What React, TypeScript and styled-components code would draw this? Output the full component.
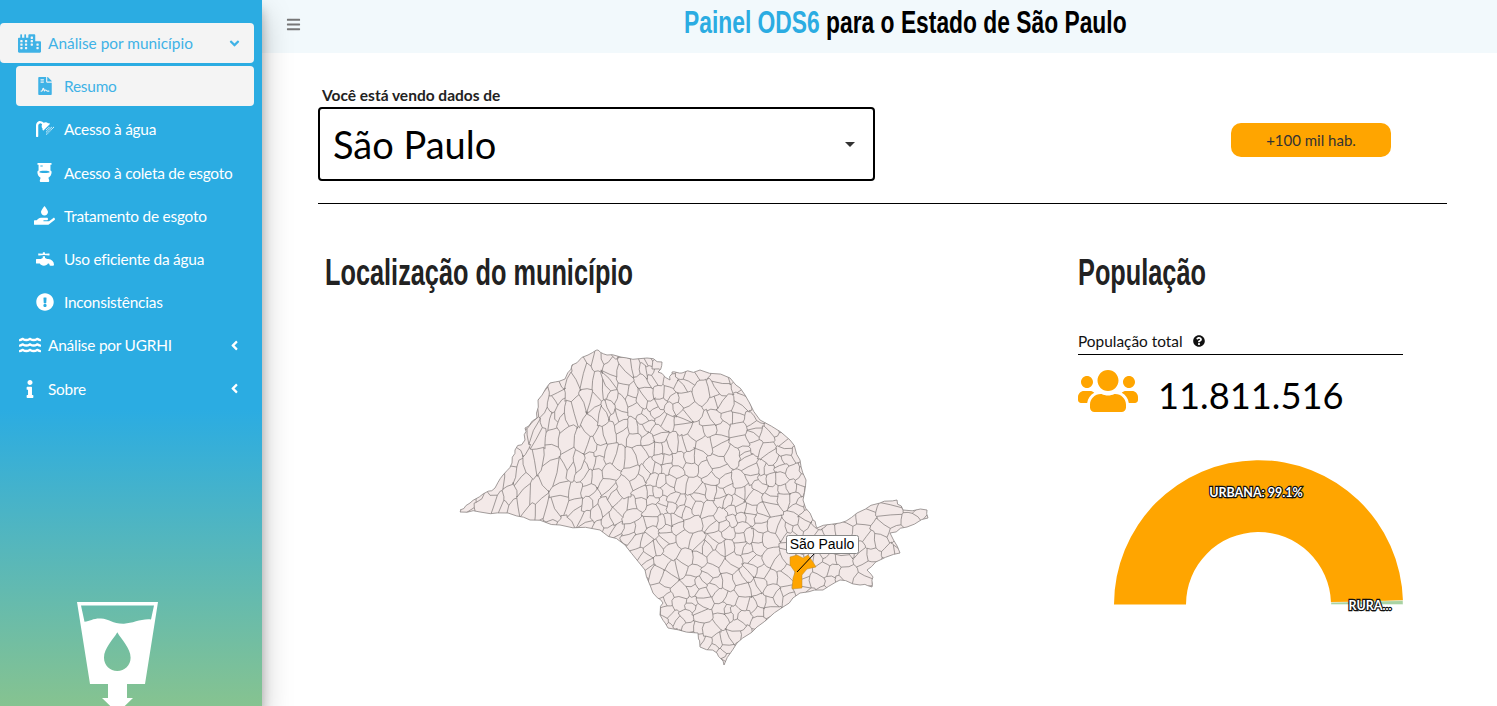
import React from 'react';
import styled, { createGlobalStyle } from 'styled-components';
import {
  FaAngleDown,
  FaAngleLeft,
  FaBars,
  FaCity,
  FaExclamationCircle,
  FaFaucet,
  FaFileContract,
  FaHandHoldingWater,
  FaInfo,
  FaQuestionCircle,
  FaShower,
  FaToilet,
  FaUsers,
  FaWater,
} from 'react-icons/fa';

const BODY_FONT = '"Lato", "Noto Sans", sans-serif';
const TITLE_FONT = '"Liberation Sans", sans-serif';
const BLUE = '#2bace2';
const ORANGE = '#ffa500';

type Point = [number, number];

// state outline in page pixels, the map origin (455, 345) is taken off when drawing
const OUTLINE: Point[] = [
  [460, 510], [470, 503], [483, 494], [495, 488], [503, 475], [512, 463], [515, 450], [525, 440],
  [525, 428], [537, 418], [538, 400], [550, 383], [565, 379], [572, 365], [588, 355], [598, 350],
  [607, 355], [627, 358], [647, 358], [662, 362], [658, 372], [670, 380], [672, 372], [682, 373],
  [700, 370], [730, 378], [745, 395], [760, 420], [790, 440], [800, 460], [806, 480], [803, 500],
  [813, 520], [817, 528], [840, 523], [857, 513], [880, 503], [897, 500], [903, 510], [927, 510],
  [928, 518], [907, 527], [890, 533], [900, 553], [880, 560], [867, 570], [873, 577], [872, 587],
  [860, 585], [840, 580], [823, 590], [800, 593], [783, 607], [757, 627], [737, 643], [724, 665],
  [717, 653], [700, 647], [698, 633], [668, 628], [660, 615], [663, 603], [653, 593], [645, 570],
  [625, 545], [600, 530], [560, 525], [530, 520], [508, 513], [480, 512], [460, 512],
];

const CAPITAL: Point[] = [
  [790, 557], [797, 555], [803, 558], [808, 555], [813, 562], [816, 567], [807, 569], [802, 575],
  [802, 588], [792, 589], [793, 578], [795, 572], [790, 565],
];

const makeRandom = (seed: number) => () => {
  seed = (seed + 0x6d2b79f5) | 0;
  let t = Math.imul(seed ^ (seed >>> 15), 1 | seed);
  t = (t + Math.imul(t ^ (t >>> 7), 61 | t)) ^ t;
  return ((t ^ (t >>> 14)) >>> 0) / 4294967296;
};

const toPath = (points: Point[]) =>
  points.map(([x, y], i) => `${i ? 'L' : 'M'}${(x - 455).toFixed(1)} ${(y - 345).toFixed(1)}`).join('') + 'Z';

const roughen = (points: Point[]) => {
  const random = makeRandom(5);
  const out: Point[] = [];
  points.forEach((p, i) => {
    const q = points[(i + 1) % points.length];
    out.push(p);
    out.push([(p[0] * 2 + q[0]) / 3 + (random() - 0.5) * 3, (p[1] * 2 + q[1]) / 3 + (random() - 0.5) * 3]);
    out.push([(p[0] + q[0] * 2) / 3 + (random() - 0.5) * 3, (p[1] + q[1] * 2) / 3 + (random() - 0.5) * 3]);
  });
  return out;
};

const STATE_PATH = toPath(roughen(OUTLINE));

// west of the state the municipalities are long and thin, so the mesh gets stretched there
const warp = ([x, y]: Point): Point => {
  const t = Math.max(0, Math.min(1, (650 - x) / 190));
  const stretched = 460 + (y - 460) * (1 + 1.3 * t);
  return [x - (stretched - 460) * 0.3 * t, stretched];
};

// municipal borders: a voronoi mesh with wobbly edges, clipped to the state
const buildMesh = () => {
  const random = makeRandom(17);
  const seeds: Point[] = [];
  for (let y = 345; y < 675; y += 10) {
    for (let x = 425; x < 935; x += 10) {
      const keep = x > 830 ? 0.5 : 0.78;
      if (random() < keep) seeds.push([x + random() * 9.5, y + random() * 9.5]);
    }
  }
  const edges = new Map<string, string>();
  const fmt = (p: Point) => `${(p[0] - 455).toFixed(1)} ${(p[1] - 345).toFixed(1)}`;
  seeds.forEach((seed, index) => {
    let cell: Point[] = [
      [seed[0] - 40, seed[1] - 40],
      [seed[0] + 40, seed[1] - 40],
      [seed[0] + 40, seed[1] + 40],
      [seed[0] - 40, seed[1] + 40],
    ];
    seeds.forEach((other, otherIndex) => {
      if (otherIndex === index) return;
      const dx = other[0] - seed[0];
      const dy = other[1] - seed[1];
      if (dx * dx + dy * dy > 6400) return;
      const mx = (seed[0] + other[0]) / 2;
      const my = (seed[1] + other[1]) / 2;
      const side = (p: Point) => (p[0] - mx) * dx + (p[1] - my) * dy;
      const next: Point[] = [];
      cell.forEach((p, i) => {
        const q = cell[(i + 1) % cell.length];
        const sp = side(p);
        const sq = side(q);
        if (sp <= 0) next.push(p);
        if (sp * sq < 0) {
          const t = sp / (sp - sq);
          next.push([p[0] + (q[0] - p[0]) * t, p[1] + (q[1] - p[1]) * t]);
        }
      });
      cell = next;
    });
    cell.forEach((p, i) => {
      const q = cell[(i + 1) % cell.length];
      const a = `${p[0].toFixed(1)},${p[1].toFixed(1)}`;
      const b = `${q[0].toFixed(1)},${q[1].toFixed(1)}`;
      const key = a < b ? `${a}|${b}` : `${b}|${a}`;
      if (edges.has(key)) return;
      const wobble = makeRandom(Math.round(p[0] * q[0] + p[1] * q[1]));
      const mid: Point = [
        (p[0] + q[0]) / 2 + (wobble() - 0.5) * 3,
        (p[1] + q[1]) / 2 + (wobble() - 0.5) * 3,
      ];
      edges.set(key, `M${fmt(warp(p))}L${fmt(warp(mid))}L${fmt(warp(q))}`);
    });
  });
  return Array.from(edges.values()).join('');
};

const MESH = buildMesh();

const GlobalStyle = createGlobalStyle`
  html, body {
    margin: 0;
    height: 100%;
    overflow: hidden;
    background: #fff;
  }
  #root {
    height: 100%;
  }
`;

const Page = styled.div`
  display: flex;
  height: 706px;
  font-family: ${BODY_FONT};
  overflow: hidden;
`;

const Sidebar = styled.aside`
  position: relative;
  z-index: 2;
  flex: 0 0 262px;
  display: flex;
  flex-direction: column;
  padding-top: 23px;
  box-sizing: border-box;
  background: linear-gradient(180deg, ${BLUE} 0%, ${BLUE} 58%, #86c390 100%);
  box-shadow: 0 14px 28px rgba(0, 0, 0, 0.25), 0 10px 10px rgba(0, 0, 0, 0.22);
  overflow: hidden;
`;

const Nav = styled.nav`
  display: flex;
  flex-direction: column;
  gap: 3.2px;
  padding-right: 8px;
`;

const NavItem = styled.div<{ $active?: boolean; $child?: boolean }>`
  display: flex;
  align-items: center;
  height: 40px;
  margin-left: ${({ $child }) => ($child ? '16px' : '0')};
  padding: 0 12px 0 18px;
  border-radius: 4px;
  font-size: 15.4px;
  letter-spacing: ${({ $child, $active }) => (!$child && $active ? '0' : '-0.22px')};
  color: ${({ $active }) => ($active ? '#3fb2e6' : '#fff')};
  background: ${({ $active }) => ($active ? '#f4f4f4' : 'transparent')};
`;

const NavIcon = styled.span<{ $child?: boolean; $size: number }>`
  flex: 0 0 auto;
  display: flex;
  justify-content: center;
  width: ${({ $child }) => ($child ? '21px' : '23px')};
  margin-right: ${({ $child }) => ($child ? '9px' : '7px')};
  font-size: ${({ $size }) => $size}px;
`;

const NavArrow = styled.span`
  display: flex;
  margin-left: auto;
  font-size: 15px;
`;

const Logo = styled.svg`
  display: block;
  width: 81px;
  height: 112px;
  margin: auto 0 -8px 77px;
  flex: 0 0 auto;
`;

const Main = styled.main`
  flex: 1;
  min-width: 0;
  display: flex;
  flex-direction: column;
`;

const TopBar = styled.header`
  position: relative;
  flex: 0 0 53px;
  display: flex;
  align-items: center;
  justify-content: center;
  background: #f2f9fc;
`;

const MenuButton = styled.span`
  position: absolute;
  left: 24px;
  top: 17px;
  display: flex;
  font-size: 15px;
  color: #777;
`;

const Title = styled.h1`
  display: inline-block;
  margin: 0 0 8px;
  font-family: ${TITLE_FONT};
  font-size: 32px;
  font-weight: 700;
  white-space: nowrap;
  color: #000;
  transform: translateX(26px) scaleX(0.713);
`;

const TitleAccent = styled.span`
  color: ${BLUE};
`;

const Content = styled.div`
  display: flex;
  flex-direction: column;
  padding: 34px 50px 0 56px;
`;

const FilterRow = styled.div`
  display: flex;
  align-items: flex-start;
  justify-content: space-between;
  padding-right: 56px;
`;

const FilterLabel = styled.label`
  display: block;
  height: 20px;
  padding-left: 4px;
  font-size: 15.5px;
  font-weight: 700;
  line-height: 16px;
  color: #222;
`;

const SelectBox = styled.div`
  display: flex;
  align-items: center;
  justify-content: space-between;
  width: 557px;
  height: 74px;
  box-sizing: border-box;
  padding: 0 18px 0 13px;
  border: 2px solid #000;
  border-radius: 4px;
  font-size: 38px;
  color: #000;
`;

const Caret = styled.span`
  width: 0;
  height: 0;
  border-left: 5px solid transparent;
  border-right: 5px solid transparent;
  border-top: 5px solid #333;
`;

const SizeBadge = styled.div`
  margin-top: 36px;
  width: 160px;
  height: 34px;
  border-radius: 10px;
  background: ${ORANGE};
  font-size: 15px;
  line-height: 34px;
  text-align: center;
  color: #333;
`;

const Divider = styled.hr`
  width: 100%;
  margin: 22px 0 0;
  border: 0;
  border-top: 1px solid #000;
`;

const Columns = styled.div`
  display: grid;
  grid-template-columns: 760px 325px;
  margin-top: 46px;
`;

const Heading = styled.h2`
  margin: 0;
  font-family: ${TITLE_FONT};
  font-size: 37px;
  font-weight: 700;
  line-height: 46px;
  white-space: nowrap;
  color: #222;
  transform: scaleX(0.684);
  transform-origin: left center;
`;

const MapHeading = styled(Heading)`
  margin-left: 7px;
`;

const MapFigure = styled.svg`
  display: block;
  margin: 49px 0 0 137px;
`;

const Metric = styled.div`
  margin-top: 32px;
`;

const MetricLabel = styled.div`
  display: flex;
  align-items: center;
  gap: 9px;
  height: 27px;
  padding-bottom: 1px;
  box-sizing: border-box;
  border-bottom: 1px solid #000;
  font-size: 15.4px;
  color: #111;
`;

const MetricHelp = styled.span`
  display: flex;
  font-size: 12px;
  margin-left: 1px;
`;

const MetricValue = styled.div`
  display: flex;
  align-items: center;
  gap: 20px;
  height: 79px;
  font-size: 36.3px;
  color: #000;
`;

const MetricIcon = styled.span`
  display: flex;
  margin-bottom: 7px;
  font-size: 60px;
  color: ${ORANGE};
`;

const Gauge = styled.svg`
  display: block;
  margin-top: 26px;
  overflow: visible;
`;

const GaugeLabel = styled.text`
  font-family: ${BODY_FONT};
  font-size: 12.5px;
  font-weight: 700;
  fill: #fff;
  stroke: #111;
  stroke-width: 2.4px;
  paint-order: stroke;
`;

const menu = [
  { label: 'Resumo', icon: <FaFileContract />, size: 18, active: true },
  { label: 'Acesso à água', icon: <FaShower />, size: 18 },
  { label: 'Acesso à coleta de esgoto', icon: <FaToilet />, size: 19 },
  { label: 'Tratamento de esgoto', icon: <FaHandHoldingWater />, size: 21 },
  { label: 'Uso eficiente da água', icon: <FaFaucet />, size: 18 },
  { label: 'Inconsistências', icon: <FaExclamationCircle />, size: 18 },
];

const polar = (cx: number, cy: number, r: number, deg: number) => {
  const a = (deg * Math.PI) / 180;
  return `${(cx + r * Math.cos(a)).toFixed(2)} ${(cy - r * Math.sin(a)).toFixed(2)}`;
};

const slice = (from: number, to: number) =>
  `M${polar(144.5, 144.5, 144.5, from)}A144.5 144.5 0 0 1 ${polar(144.5, 144.5, 144.5, to)}` +
  `L${polar(144.5, 144.5, 72.5, to)}A72.5 72.5 0 0 0 ${polar(144.5, 144.5, 72.5, from)}Z`;

const App = () => {
  return (
    <Page>
      <GlobalStyle />
      <Sidebar>
        <Nav>
          <NavItem $active>
            <NavIcon $size={23}><FaCity /></NavIcon>
            Análise por município
            <NavArrow><FaAngleDown /></NavArrow>
          </NavItem>
          {menu.map((item) => (
            <NavItem key={item.label} $child $active={item.active}>
              <NavIcon $child $size={item.size}>{item.icon}</NavIcon>
              {item.label}
            </NavItem>
          ))}
          <NavItem>
            <NavIcon $size={22}><FaWater /></NavIcon>
            Análise por UGRHI
            <NavArrow><FaAngleLeft /></NavArrow>
          </NavItem>
          <NavItem>
            <NavIcon $size={18}><FaInfo /></NavIcon>
            Sobre
            <NavArrow><FaAngleLeft /></NavArrow>
          </NavItem>
        </Nav>
        <Logo viewBox="0 0 81 112">
          <path
            fill="#fff"
            fillRule="evenodd"
            d="M0 0H81L68 82H50V96H56L40.500 111L25 96H31V82H13ZM4 3.500L7.500 19.700C13 19 17 16 24 16.500C32 17 36 22 47 21.700C56 21.500 64 16.500 74 17.500L77 3.500ZM40.300 30.300C36 38 27 46 27 55.700C27 63 33 69 40.300 69C47.600 69 53.600 63 53.600 55.700C53.600 46 44.600 38 40.300 30.300Z"
          />
        </Logo>
      </Sidebar>
      <Main>
        <TopBar>
          <MenuButton><FaBars /></MenuButton>
          <Title>
            <TitleAccent>Painel ODS6</TitleAccent> para o Estado de São Paulo
          </Title>
        </TopBar>
        <Content>
          <FilterRow>
            <div>
              <FilterLabel>Você está vendo dados de</FilterLabel>
              <SelectBox>
                São Paulo
                <Caret />
              </SelectBox>
            </div>
            <SizeBadge>+100 mil hab.</SizeBadge>
          </FilterRow>
          <Divider />
          <Columns>
            <section>
              <MapHeading>Localização do município</MapHeading>
              <MapFigure width={480} height={325} viewBox="0 0 480 325">
                <defs>
                  <clipPath id="state">
                    <path d={STATE_PATH} />
                  </clipPath>
                </defs>
                <path d={STATE_PATH} fill="#f3e9e8" />
                <path d={MESH} fill="none" stroke="#7b7574" strokeWidth={0.7} clipPath="url(#state)" />
                <path d={STATE_PATH} fill="none" stroke="#8a8483" strokeWidth={0.8} />
                <path d={toPath(CAPITAL)} fill={ORANGE} stroke="#b98a30" strokeWidth={0.5} />
                <path d="M342 227L360 208" stroke="#000" strokeWidth={1} />
                <rect x={331.500} y={190.500} width={72} height={18} rx={2} fill="#fff" stroke="#888" />
                <text x={367} y={204} textAnchor="middle" fontFamily='"Liberation Sans", sans-serif' fontSize={14} fill="#000">
                  São Paulo
                </text>
              </MapFigure>
            </section>
            <section>
              <Heading>População</Heading>
              <Metric>
                <MetricLabel>
                  População total
                  <MetricHelp><FaQuestionCircle /></MetricHelp>
                </MetricLabel>
                <MetricValue>
                  <MetricIcon><FaUsers /></MetricIcon>
                  11.811.516
                </MetricValue>
              </Metric>
              <Gauge width={325} height={146} viewBox="-36 0 325 146">
                <path d={slice(180, 1.6)} fill={ORANGE} />
                <path d={slice(1.6, 0)} fill="#a9d3a3" stroke="#fff" strokeWidth={0.4} />
                <GaugeLabel x={142} y={37} textAnchor="middle">URBANA: 99.1%</GaugeLabel>
                <GaugeLabel x={256} y={150} textAnchor="middle">RURA...</GaugeLabel>
              </Gauge>
            </section>
          </Columns>
        </Content>
      </Main>
    </Page>
  );
};

export default App;
